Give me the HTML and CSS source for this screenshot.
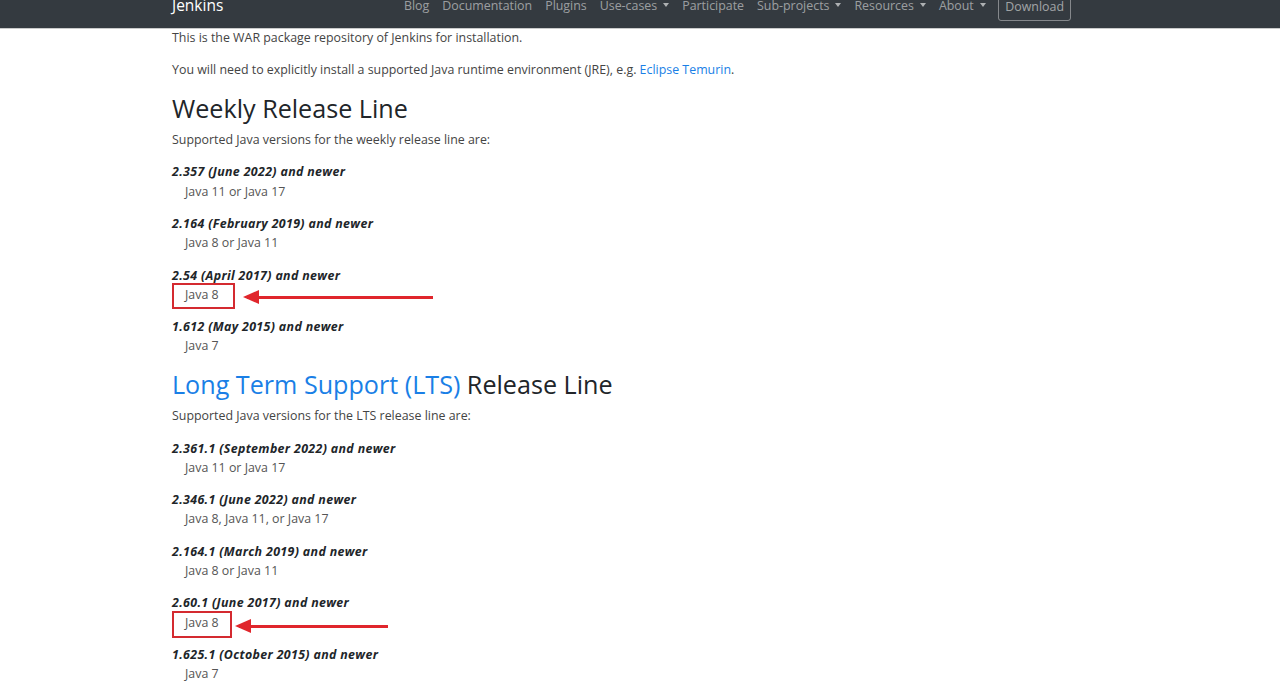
FILE: index.html
```html
<!DOCTYPE html>
<html lang="en">
<head>
<meta charset="utf-8">
<title>Jenkins WAR packages</title>
<link rel="stylesheet" href="styles.css">
</head>
<body>
<header class="navbar">
  <div class="nav-inner">
    <a class="brand" href="#">Jenkins</a>
    <nav class="nav-links">
      <a class="nav-link" href="#">Blog</a>
      <a class="nav-link" href="#">Documentation</a>
      <a class="nav-link" href="#">Plugins</a>
      <a class="nav-link dropdown" href="#">Use-cases</a>
      <a class="nav-link" href="#">Participate</a>
      <a class="nav-link dropdown" href="#">Sub-projects</a>
      <a class="nav-link dropdown" href="#">Resources</a>
      <a class="nav-link dropdown" href="#">About</a>
      <a class="btn-download" href="#">Download</a>
    </nav>
  </div>
</header>
<main class="content">
  <p>This is the WAR package repository of Jenkins for installation.</p>
  <p>You will need to explicitly install a supported Java runtime environment (JRE), e.g. <a href="#">Eclipse Temurin</a>.</p>

  <h2>Weekly Release Line</h2>
  <p>Supported Java versions for the weekly release line are:</p>
  <dl><dt>2.357 (June 2022) and newer</dt><dd>Java 11 or Java 17</dd></dl>
  <dl><dt>2.164 (February 2019) and newer</dt><dd>Java 8 or Java 11</dd></dl>
  <dl><dt>2.54 (April 2017) and newer</dt><dd class="marked">Java 8<span class="mark-box mark-a"></span><span class="mark-arrow arrow-a"></span></dd></dl>
  <dl><dt>1.612 (May 2015) and newer</dt><dd>Java 7</dd></dl>

  <h2><a href="#">Long Term Support (LTS)</a> Release Line</h2>
  <p>Supported Java versions for the LTS release line are:</p>
  <dl><dt>2.361.1 (September 2022) and newer</dt><dd>Java 11 or Java 17</dd></dl>
  <dl><dt>2.346.1 (June 2022) and newer</dt><dd>Java 8, Java 11, or Java 17</dd></dl>
  <dl><dt>2.164.1 (March 2019) and newer</dt><dd>Java 8 or Java 11</dd></dl>
  <dl><dt>2.60.1 (June 2017) and newer</dt><dd class="marked">Java 8<span class="mark-box mark-b"></span><span class="mark-arrow arrow-b"></span></dd></dl>
  <dl><dt>1.625.1 (October 2015) and newer</dt><dd>Java 7</dd></dl>
</main>
</body>
</html>
```
FILE: styles.css
```css
html, body {
  margin: 0;
  padding: 0;
  background: #ffffff;
  overflow: hidden;
}
body {
  font-family: "Open Sans", "Noto Sans", "Liberation Sans", sans-serif;
  font-size: 12.4px;
  line-height: 19.3px;
  color: #444444;
}
a {
  color: #1a7fe6;
  text-decoration: none;
}
.navbar {
  height: 28px;
  background: #343a40;
  border-bottom: 1px solid #c9cacb;
  overflow: hidden;
}
.nav-inner {
  width: 899px;
  margin-left: 172px;
  margin-top: -12px;
  height: 36px;
  display: flex;
  align-items: center;
  justify-content: space-between;
}
.brand {
  color: #ffffff;
  font-size: 15.5px;
  font-weight: 500;
  margin-top: -1px;
}
.nav-links {
  display: flex;
  align-items: center;
}
.nav-link {
  color: rgba(255, 255, 255, 0.52);
  font-size: 12.4px;
  padding: 0 6.5px;
}
.dropdown::after {
  content: "";
  display: inline-block;
  margin-left: 6px;
  vertical-align: 3px;
  border-top: 4px solid rgba(255, 255, 255, 0.6);
  border-left: 3.5px solid transparent;
  border-right: 3.5px solid transparent;
}
.btn-download {
  margin-left: 6px;
  color: rgba(255, 255, 255, 0.55);
  font-size: 12.4px;
  border: 1px solid rgba(255, 255, 255, 0.4);
  border-radius: 3px;
  padding: 4px 6px 4px 6px;
  line-height: 19px;
}
.content {
  padding-left: 172px;
  margin-top: -1px;
}
p {
  margin: 0 0 13px 0;
}
h2 {
  margin: 0 0 6.5px 0;
  font-size: 25.15px;
  line-height: 31px;
  font-weight: 500;
  color: #212529;
}
dl {
  margin: 0 0 13px 0;
}
dt {
  font-weight: 700;
  font-style: italic;
  color: #212529;
  letter-spacing: 0.35px;
}
dd {
  margin: 0 0 0 13px;
  color: #555555;
}
.marked {
  position: relative;
}
.mark-box {
  position: absolute;
  border: 2px solid #d42a30;
  top: -2px;
  height: 22px;
  left: -13px;
}
.mark-a { width: 59px; }
.mark-b { width: 56px; height: 23px; }
.mark-arrow {
  position: absolute;
  top: 11.5px;
  height: 3px;
  background: #e0262c;
}
.mark-arrow::before {
  content: "";
  position: absolute;
  left: -4px;
  top: -6px;
  border-right: 16px solid #e0262c;
  border-top: 7.5px solid transparent;
  border-bottom: 7.5px solid transparent;
}
.arrow-a { left: 62px; width: 186px; }
.arrow-b { left: 54px; width: 149px; top: 12.5px; }
```
